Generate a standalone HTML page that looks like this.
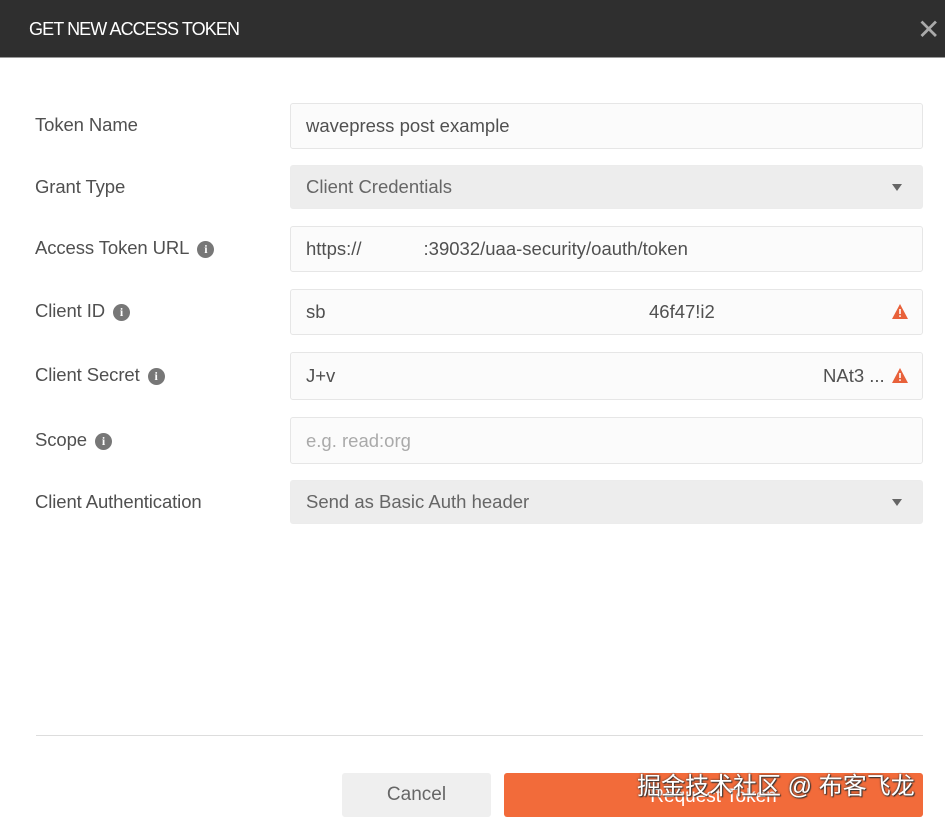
<!DOCTYPE html>
<html><head><meta charset="utf-8"><style>
*{box-sizing:border-box;margin:0;padding:0}
body{width:945px;height:818px;background:#fff;font-family:"Liberation Sans",sans-serif;position:relative;overflow:hidden;color:#555}
.hdr{position:absolute;left:0;top:0;width:945px;height:58px;background:#2f2f2f;border-bottom:1px solid #999}
.hdr .t{position:absolute;left:29px;top:19px;color:#fff;font-size:18px;letter-spacing:-0.9px}
.hdr .x{position:absolute;left:917px;top:13px;color:#aaa;font-size:28px;font-weight:300}
.lbl{position:absolute;left:35px;font-size:18.5px;color:#505050;letter-spacing:-0.1px}
.info{display:inline-block;width:17px;height:17px;border-radius:50%;background:#777;color:#fff;font-size:12px;font-weight:bold;text-align:center;line-height:17px;margin-left:8px;vertical-align:1px;font-family:"Liberation Serif",serif}
.in{position:absolute;left:290px;width:633px;border:1px solid #e6e6e6;background:#fbfbfb;border-radius:3px;font-size:18.5px;color:#505050;padding-left:15px;display:flex;align-items:center}
.sel{background:#ededed;border-color:#ececec;color:#666}
.arr{position:absolute;right:20px;top:50%;margin-top:-3px;border-left:5px solid transparent;border-right:5px solid transparent;border-top:7px solid #666}
.warn{position:absolute;right:13px;top:50%;margin-top:-9px}
.ph{color:#aaa}
.div{position:absolute;left:36px;top:735px;width:887px;height:1px;background:#ddd}
.btn{position:absolute;top:773px;height:44px;border-radius:3px;font-size:19px;display:flex;align-items:center;justify-content:center}
.wm{position:absolute;left:637px;top:766px;font-family:"Liberation Sans","Noto Sans CJK SC",sans-serif;font-size:24px;color:#fff;text-shadow:0 0 2px #333,1px 1px 1px #333}
</style></head><body>
<div class="hdr"><div class="t">GET NEW ACCESS TOKEN</div><div class="x">✕</div></div>

<div class="lbl" style="top:114px">Token Name</div>
<div class="in" style="top:103px;height:46px">wavepress post example</div>

<div class="lbl" style="top:176px">Grant Type</div>
<div class="in sel" style="top:165px;height:44px">Client Credentials<span class="arr"></span></div>

<div class="lbl" style="top:237px">Access Token URL<span class="info">i</span></div>
<div class="in" style="top:226px;height:46px">https://<span style="margin-left:62px">:39032/uaa-security/oauth/token</span></div>

<div class="lbl" style="top:300px">Client ID<span class="info">i</span></div>
<div class="in" style="top:289px;height:46px">sb<span style="position:absolute;left:358px">46f47!i2</span>
<svg class="warn" width="18" height="17" viewBox="0 0 18 17"><path d="M9 1L17 16H1Z" fill="#e8613a"/><rect x="8.2" y="6" width="1.6" height="5" fill="#fff"/><rect x="8.2" y="12.3" width="1.6" height="1.6" fill="#fff"/></svg></div>

<div class="lbl" style="top:364px">Client Secret<span class="info">i</span></div>
<div class="in" style="top:352px;height:48px">J+v<span style="position:absolute;left:532px">NAt3 ...</span>
<svg class="warn" width="18" height="17" viewBox="0 0 18 17"><path d="M9 1L17 16H1Z" fill="#e8613a"/><rect x="8.2" y="6" width="1.6" height="5" fill="#fff"/><rect x="8.2" y="12.3" width="1.6" height="1.6" fill="#fff"/></svg></div>

<div class="lbl" style="top:429px">Scope<span class="info">i</span></div>
<div class="in" style="top:417px;height:47px"><span class="ph">e.g. read:org</span></div>

<div class="lbl" style="top:491px">Client Authentication</div>
<div class="in sel" style="top:480px;height:44px">Send as Basic Auth header<span class="arr"></span></div>

<div class="div"></div>
<div class="btn" style="left:342px;width:149px;background:#efefef;color:#666">Cancel</div>
<div class="btn" style="left:504px;width:419px;background:#f26b3a;color:#fff;padding-top:4px">Request Token</div>
<div class="wm">掘金技术社区 @ 布客飞龙</div>
</body></html>
